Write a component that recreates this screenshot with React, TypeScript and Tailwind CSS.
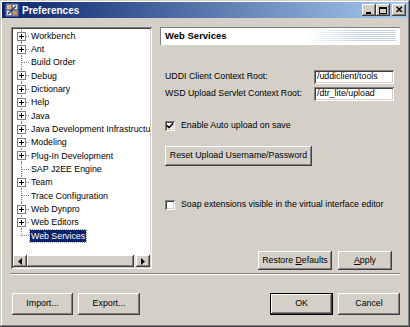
import React from "react";

const raised =
  "shadow-[inset_-1px_-1px_#404040,inset_1px_1px_#ffffff,inset_-2px_-2px_#808080,inset_2px_2px_#d4d0c8]";
const sunken =
  "shadow-[inset_1px_1px_#808080,inset_-1px_-1px_#ffffff,inset_2px_2px_#404040,inset_-2px_-2px_#d4d0c8]";

type Item = { label: string; plus: boolean; selected?: boolean };
const items: Item[] = [
  { label: "Workbench", plus: true },
  { label: "Ant", plus: true },
  { label: "Build Order", plus: false },
  { label: "Debug", plus: true },
  { label: "Dictionary", plus: true },
  { label: "Help", plus: true },
  { label: "Java", plus: true },
  { label: "Java Development Infrastructure", plus: true },
  { label: "Modeling", plus: true },
  { label: "Plug-In Development", plus: true },
  { label: "SAP J2EE Engine", plus: false },
  { label: "Team", plus: true },
  { label: "Trace Configuration", plus: false },
  { label: "Web Dynpro", plus: true },
  { label: "Web Editors", plus: true },
  { label: "Web Services", plus: false, selected: true },
];

function Btn({ children, w, h = 22, def = false }: { children: React.ReactNode; w: number; h?: number; def?: boolean }) {
  return (
    <div
      className={`flex items-center justify-center bg-[#d4d0c8] text-black ${
        def
          ? "shadow-[inset_0_0_0_1px_#000000,inset_-2px_-2px_#404040,inset_2px_2px_#ffffff,inset_-3px_-3px_#808080]"
          : raised
      }`}
      style={{ width: w, height: h }}
    >
      {children}
    </div>
  );
}

function Check({ checked }: { checked: boolean }) {
  return (
    <div className={`w-[10px] h-[10px] bg-white ${sunken} flex items-center justify-center`}>
      {checked && (
        <svg width="8" height="8" viewBox="0 0 8 8">
          <path d="M1 3.5 L3 5.5 L7 1.5" stroke="#000" strokeWidth="1.6" fill="none" />
        </svg>
      )}
    </div>
  );
}

function TitleBtn({ children }: { children: React.ReactNode }) {
  return (
    <div className={`w-[14px] h-[12px] bg-[#d4d0c8] ${raised} flex items-center justify-center`}>{children}</div>
  );
}

export default function App() {
  return (
    <div
      className="w-[410px] h-[327px] bg-[#d4d0c8] relative shadow-[inset_-1px_-1px_#404040,inset_1px_1px_#d4d0c8,inset_-2px_-2px_#808080,inset_2px_2px_#ffffff] text-[8.8px] text-black overflow-hidden"
      style={{ fontFamily: '"Liberation Sans", Arial, sans-serif' }}
    >
      {/* Title bar */}
      <div className="mx-[2px] mt-[2px] h-[16px] bg-[linear-gradient(90deg,#0a246a,#a6caf0)] flex items-center pl-[3px] pr-[2px]">
        <svg width="14" height="14" viewBox="0 0 14 14">
          <rect x="0.5" y="0.5" width="13" height="13" fill="#6c7ca8" />
          <rect x="2" y="2" width="4" height="4" fill="#e8b060" />
          <rect x="8" y="2" width="4" height="4" fill="#f0f0f0" />
          <rect x="2" y="8" width="4" height="4" fill="#f0f0f0" />
          <rect x="8" y="8" width="4" height="4" fill="#d89040" />
          <path d="M3 11 L11 3" stroke="#303040" strokeWidth="1.5" />
        </svg>
        <span className="ml-[3px] text-white font-bold text-[10px]">Preferences</span>
        <div className="flex-1" />
        <div className="flex items-center">
          <TitleBtn>
            <div className="w-[5px] h-[2px] bg-black mt-[5px] -ml-[2px]" />
          </TitleBtn>
          <TitleBtn>
            <div className="w-[8px] h-[7px] border border-black border-t-2" />
          </TitleBtn>
          <div className="w-[2px]" />
          <TitleBtn>
            <span className="font-bold text-[10px] leading-none -mt-[1px]">✕</span>
          </TitleBtn>
        </div>
      </div>

      {/* Body */}
      <div className="pl-[11px] pr-[10px] pt-[9px] flex h-[252px]">
        {/* Tree */}
        <div className={`w-[141px] h-[242px] bg-white ${sunken} p-[2px] flex flex-col`}>
          <div className="flex-1 overflow-hidden relative">
            {items.map((it, i) => (
              <div key={it.label} className="relative h-[13.33px] flex items-center whitespace-nowrap">
                <div
                  className={`absolute left-[8px] top-0 border-l border-dotted border-[#808080] ${
                    i === items.length - 1 ? "h-[7px]" : "h-full"
                  }`}
                />
                <div className="absolute left-[8px] top-[6.5px] w-[8px] border-t border-dotted border-[#808080]" />
                {it.plus && (
                  <div className="absolute left-[4px] top-[2.5px] w-[9px] h-[9px] bg-white border border-[#808080] flex items-center justify-center">
                    <svg width="7" height="7" viewBox="0 0 7 7">
                      <path d="M1 3.5 H6 M3.5 1 V6" stroke="#000" strokeWidth="1" />
                    </svg>
                  </div>
                )}
                <span
                  className={`ml-[17px] px-[1px] leading-[12px] ${
                    it.selected ? "bg-[#0a246a] text-white outline outline-1 outline-dotted outline-[#a0a0a0]" : ""
                  }`}
                >
                  {it.label}
                </span>
              </div>
            ))}
          </div>
          {/* Horizontal scrollbar */}
          <div className="h-[12px] flex">
            <div className={`w-[14px] h-[12px] bg-[#d4d0c8] ${raised} flex items-center justify-center`}>
              <svg width="4" height="7" viewBox="0 0 4 7">
                <path d="M4 0 L0 3.5 L4 7 Z" fill="#000" />
              </svg>
            </div>
            <div className={`w-[107px] h-[12px] bg-[#d4d0c8] ${raised}`} />
            <div className="flex-1 bg-[repeating-conic-gradient(#ffffff_0%_25%,#d4d0c8_0%_50%)] bg-[length:2px_2px]" />
            <div className={`w-[14px] h-[12px] bg-[#d4d0c8] ${raised} flex items-center justify-center`}>
              <svg width="4" height="7" viewBox="0 0 4 7">
                <path d="M0 0 L4 3.5 L0 7 Z" fill="#000" />
              </svg>
            </div>
          </div>
        </div>

        {/* Right panel */}
        <div className="ml-[8px] flex-1 flex flex-col h-[243px]">
          <div className="h-[18px] bg-white shadow-[inset_1px_1px_#808080,inset_-1px_-1px_#ffffff] relative flex items-center pl-[5px] overflow-hidden">
            <div className="absolute right-[4px] top-[3px] bottom-[3px] w-[90px] bg-[repeating-linear-gradient(180deg,#c4d0ea_0px,#c4d0ea_1px,#ffffff_1px,#ffffff_2px)] [mask-image:linear-gradient(90deg,transparent,#000_60%)]" />
            <span className="relative font-bold text-[9.5px]">Web Services</span>
          </div>

          <div className="mt-[25px] flex flex-col gap-[3px] pl-[5px] pr-[6px]">
            <div className="flex items-center h-[14px]">
              <span className="flex-1">UDDI Client Context Root:</span>
              <div className={`w-[80px] h-[14px] bg-white ${sunken} flex items-center pl-[3px]`}>/uddiclient/tools</div>
            </div>
            <div className="flex items-center h-[14px]">
              <span className="flex-1">WSD Upload Servlet Context Root:</span>
              <div className={`w-[80px] h-[14px] bg-white ${sunken} flex items-center pl-[3px]`}>/dtr_lite/upload</div>
            </div>
          </div>

          <div className="mt-[18px] h-[13px] flex items-center pl-[5px]">
            <Check checked />
            <span className="ml-[6px]">Enable Auto upload on save</span>
          </div>

          <div className="mt-[14px] pl-[5px]">
            <Btn w={147} h={20}>
              Reset Upload Username/Password
            </Btn>
          </div>

          <div className="mt-[32px] h-[13px] flex items-center pl-[5px]">
            <Check checked={false} />
            <span className="ml-[6px]">Soap extensions visible in the virtual interface editor</span>
          </div>

          <div className="flex-1" />
          <div className="flex justify-end gap-[6px] pr-[8px]">
            <Btn w={74} h={19}>
              <span>
                Restore <span className="underline">D</span>efaults
              </span>
            </Btn>
            <Btn w={54} h={19}>
              <span>
                <span className="underline">A</span>pply
              </span>
            </Btn>
          </div>
        </div>
      </div>

      {/* Separator */}
      <div className="mx-[10px] mt-[3px] h-[2px] border-t border-[#808080] border-b border-b-white" />

      {/* Bottom buttons */}
      <div className="mt-[18px] pl-[12px] pr-[10px] flex items-center">
        <Btn w={61}>Import...</Btn>
        <div className="w-[5px]" />
        <Btn w={62}>Export...</Btn>
        <div className="flex-1" />
        <Btn w={63} def>
          OK
        </Btn>
        <div className="w-[5px]" />
        <Btn w={62}>Cancel</Btn>
      </div>
    </div>
  );
}
